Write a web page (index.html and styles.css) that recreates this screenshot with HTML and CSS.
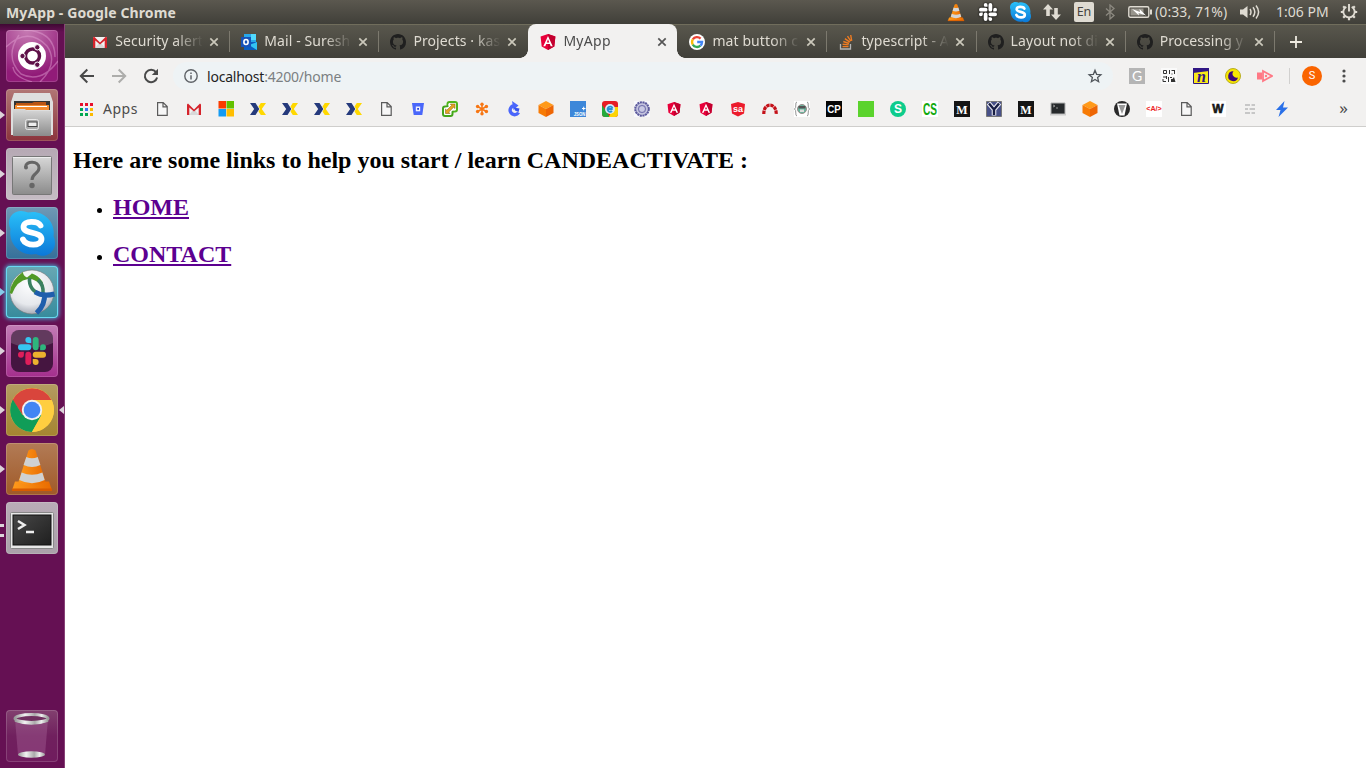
FILE: index.html
```html
<!DOCTYPE html>
<html lang="en">
<head>
<meta charset="utf-8">
<title>MyApp</title>
<link rel="stylesheet" href="styles.css">
</head>
<body>
<svg class="defs" width="0" height="0" aria-hidden="true">
  <defs>
    <linearGradient id="silver" x1="0" y1="0" x2="0" y2="1"><stop offset="0" stop-color="#d8d8d8"/><stop offset="1" stop-color="#8b8b8b"/></linearGradient>
    <linearGradient id="skyblue" x1="0" y1="0" x2="0" y2="1"><stop offset="0" stop-color="#2ac0f8"/><stop offset="1" stop-color="#0b78d8"/></linearGradient>
    <linearGradient id="orange" x1="0" y1="0" x2="1" y2="0"><stop offset="0" stop-color="#ff9b1c"/><stop offset="1" stop-color="#e86a00"/></linearGradient>
    <linearGradient id="dark" x1="0" y1="0" x2="1" y2="1"><stop offset="0" stop-color="#474747"/><stop offset="1" stop-color="#1f1f1f"/></linearGradient>
    <linearGradient id="rim" x1="0" y1="0" x2="1" y2="0"><stop offset="0" stop-color="#999"/><stop offset=".3" stop-color="#f2f2f2"/><stop offset=".6" stop-color="#aaa"/><stop offset=".8" stop-color="#eee"/><stop offset="1" stop-color="#999"/></linearGradient>
    <radialGradient id="ball" cx=".45" cy=".3" r=".7"><stop offset="0" stop-color="#fff"/><stop offset=".7" stop-color="#e6e8ec"/><stop offset="1" stop-color="#a9aeb8"/></radialGradient>
    <pattern id="mesh" width="2" height="2" patternUnits="userSpaceOnUse"><rect width="2" height="2" fill="#f4f4f4"/><rect width="1" height="1" fill="#a9adb0"/><rect x="1" y="1" width="1" height="1" fill="#a9adb0"/></pattern>
  </defs>
  <symbol id="close" viewBox="0 0 10 10"><path d="M1.300 1.300l7.400 7.400M8.700 1.300L1.300 8.700" stroke="currentColor" stroke-width="1.700" fill="none"/></symbol>
  <symbol id="github" viewBox="0 0 16 16"><path fill="#1f1f1f" d="M8 0C3.58 0 0 3.58 0 8c0 3.54 2.29 6.53 5.47 7.59.4.07.55-.17.55-.38 0-.19-.01-.82-.01-1.49-2.01.37-2.53-.49-2.69-.94-.09-.23-.48-.94-.82-1.13-.28-.15-.68-.52-.01-.53.63-.01 1.08.58 1.23.82.72 1.21 1.87.87 2.33.66.07-.52.28-.87.51-1.07-1.78-.2-3.64-.89-3.64-3.95 0-.87.31-1.59.82-2.15-.08-.2-.36-1.02.08-2.12 0 0 .67-.21 2.2.82.64-.18 1.32-.27 2-.27s1.36.09 2 .27c1.53-1.04 2.2-.82 2.2-.82.44 1.1.16 1.92.08 2.12.51.56.82 1.27.82 2.15 0 3.07-1.87 3.75-3.65 3.95.29.25.54.73.54 1.48 0 1.07-.01 1.93-.01 2.2 0 .21.15.46.55.38A8.01 8.01 0 0 0 16 8c0-4.42-3.58-8-8-8z"/></symbol>
  <symbol id="gmail" viewBox="0 0 16 16"><path fill="#f1f1f1" d="M1 3h14v11H1z"/><path fill="#d8d8d8" d="M3 14l5-6 5 6z"/><path fill="#d5232b" d="M1 14V3.400L2 2.600 8 8.400l6-5.800 1 .8V14h-2.300V6.400L8 10.600 3.300 6.400V14z"/></symbol>
  <symbol id="angular" viewBox="0 0 16 16"><path fill="#e8003a" d="M8 0l7.400 2.600-1.100 9.800L8 16l-6.300-3.600L.6 2.600z"/><path fill="#c3002f" d="M8 0l7.400 2.600-1.100 9.800L8 16z"/><path fill="#fff" fill-rule="evenodd" d="M8 2l4.700 10.300h-2L9.800 10H6.200l-.9 2.300h-2zM8 5.300L6.800 8.400h2.400z"/></symbol>
  <symbol id="xmark" viewBox="0 0 16 16"><path fill="#253a7c" d="M0 2h5.500L9.300 8l-3.800 6H0l4.200-6z"/><path fill="#f2f1f0" d="M0 4.300l3 3.200v1L0 11.700z"/><path fill="#ffd800" d="M16 2h-5.200L8.500 5.600 10 8l-1.500 2.400L10.800 14H16l-4.200-6z"/></symbol>
  <symbol id="doc" viewBox="0 0 16 16"><path fill="#f7f7f7" stroke="#5b5b5b" stroke-width="1.200" d="M3.600 1.600h5.600l4 4v8.800H3.600zM9 1.800v4h4"/></symbol>
  <symbol id="cube" viewBox="0 0 16 16"><path fill="#ff9a1a" d="M8 0l7.500 3.900L8 7.900.5 3.900z"/><path fill="#f77b05" d="M.5 3.900L8 7.900V16L.5 12z"/><path fill="#ee6605" d="M15.500 3.900L8 7.900V16l7.500-4z"/></symbol>
  <symbol id="cone" viewBox="0 0 44 44"><path fill="url(#orange)" d="M5 34h34l3 9H2z"/><path fill="#d85b00" d="M2 41h40v2.500H2z"/><path fill="url(#orange)" d="M18.500 3q3.500-3 7 0l10 31q-13.500 8-27 0z"/><path class="band" d="M16.300 9.500q5.700 2.500 11.400 0l2.700 8q-8.400 4-16.800 0zM11.600 25q10.400 4.500 20.800 0l2.300 7.500q-12.700 6.500-25.400 0z"/></symbol>
  <symbol id="skype" viewBox="0 0 46 46"><path fill="url(#skyblue)" d="M12 1C5 1 0 6 0 13q0 3 1.500 6C-1 34 12 47 27 44c9 5 19-1 19-11q0-4-1.500-7C47 11 33-1 19 2.500Q16 1 12 1z"/><path fill="none" stroke="#fff" stroke-width="5.800" stroke-linecap="round" d="M31.500 15.500C29 10.800 14.500 10 14.500 17c0 7.500 18 4 18 12 0 7.500-15.500 7.500-18.500.5"/></symbol>
  <symbol id="slack" viewBox="0 0 24 24">
    <path fill="var(--s4)" d="M5.042 15.165a2.528 2.528 0 0 1-2.520 2.523A2.528 2.528 0 0 1 0 15.165a2.527 2.527 0 0 1 2.522-2.520h2.520zM6.313 15.165a2.527 2.527 0 0 1 2.521-2.520 2.527 2.527 0 0 1 2.521 2.520v6.313A2.528 2.528 0 0 1 8.834 24a2.528 2.528 0 0 1-2.521-2.522z"/>
    <path fill="var(--s1)" d="M8.834 5.042a2.528 2.528 0 0 1-2.521-2.520A2.528 2.528 0 0 1 8.834 0a2.528 2.528 0 0 1 2.521 2.522v2.520zM8.834 6.313a2.528 2.528 0 0 1 2.521 2.521 2.528 2.528 0 0 1-2.521 2.521H2.522A2.528 2.528 0 0 1 0 8.834a2.528 2.528 0 0 1 2.522-2.521z"/>
    <path fill="var(--s2)" d="M18.956 8.834a2.528 2.528 0 0 1 2.522-2.521A2.528 2.528 0 0 1 24 8.834a2.528 2.528 0 0 1-2.522 2.521h-2.522zM17.688 8.834a2.528 2.528 0 0 1-2.523 2.521 2.527 2.527 0 0 1-2.520-2.521V2.522A2.527 2.527 0 0 1 15.165 0a2.528 2.528 0 0 1 2.523 2.522z"/>
    <path fill="var(--s3)" d="M15.165 18.956a2.528 2.528 0 0 1 2.523 2.522A2.528 2.528 0 0 1 15.165 24a2.527 2.527 0 0 1-2.520-2.522v-2.522zM15.165 17.688a2.527 2.527 0 0 1-2.520-2.523 2.526 2.526 0 0 1 2.520-2.520h6.313A2.527 2.527 0 0 1 24 15.165a2.528 2.528 0 0 1-2.522 2.523z"/>
  </symbol>
</svg>

<header class="panel">
  <div class="panel-title">MyApp - Google Chrome</div>
  <div class="indicators">
    <svg class="i-vlc plain" viewBox="0 0 44 44"><use href="#cone"/></svg>
    <svg class="i-slack mono" viewBox="0 0 24 24"><use href="#slack"/></svg>
    <svg class="i-skype" viewBox="0 0 46 46"><use href="#skype"/></svg>
    <svg class="i-net" viewBox="0 0 18 16"><path fill="#dfdbd2" d="M5 0l5 5.500H6.800V12H3.200V5.500H0zM13 16l5-5.500h-3.200V4h-3.600v6.500H8z"/></svg>
    <span class="i-lang">En</span>
    <svg class="i-bt" viewBox="0 0 10 16"><path fill="none" stroke="#8c8980" stroke-width="1.300" d="M1 4.500l8 7-4 3.500V1l4 3.500-8 7"/></svg>
    <svg class="i-bat" viewBox="0 0 24 14"><rect x=".8" y="1.800" width="20" height="10.400" rx="1.500" fill="none" stroke="#dfdbd2" stroke-width="1.400"/><path fill="#dfdbd2" d="M22 4.500h2v5h-2z"/><path fill="#98958c" d="M2.500 3.500h13v7h-13z"/><path fill="#fff" d="M4 4l8 3-.5-3L18 10.500 10.500 8l.5 2.500z"/></svg>
    <span class="i-battext">(0:33, 71%)</span>
    <svg class="i-vol" viewBox="0 0 20 16"><path fill="#dfdbd2" d="M0 5.500h3L7.500 2v12L3 10.500H0z"/><path fill="none" stroke="#dfdbd2" stroke-width="1.500" d="M10 5q2 3 0 6M13 3.200q3.600 4.800 0 9.600M16 1.500q5.200 6.500 0 13"/></svg>
    <span class="i-time">1:06 PM</span>
    <svg class="i-gear" viewBox="0 0 18 18"><path fill="none" stroke="#dfdbd2" stroke-width="1.900" d="M6.300 3.800a5.700 5.700 0 1 0 5.400 0M9 1v7.500"/><path stroke="#dfdbd2" stroke-width="2.200" d="M3.400 9H.8M17.200 9h-2.600M9 14.500v2.700M5.100 12.900l-1.900 1.900M12.900 12.900l1.900 1.900M5 5L3.200 3.200M13 5l1.800-1.800"/></svg>
  </div>
</header>

<div class="desktop">
  <nav class="launcher">
    <div class="tile dash"><svg viewBox="0 0 52 52"><g fill="none" stroke="#e5a3d5" stroke-opacity=".45" stroke-width="1.400"><path d="M0 17Q22-4 41 16q12 17-7 36M52 31Q35 54 15 44-2 27 13 5M18 0q31 1 31 27M7 37Q8 47 26 52"/></g><circle cx="26" cy="26" r="14" fill="#fff"/><circle cx="26.500" cy="26" r="7" fill="none" stroke="#5e1048" stroke-width="3.400"/><g fill="#5e1048" stroke="#fff" stroke-width="1"><circle cx="16.500" cy="26" r="2.700"/><circle cx="31.300" cy="17.300" r="2.700"/><circle cx="31.300" cy="34.700" r="2.700"/></g></svg></div>
    <div class="tile files running"><svg viewBox="0 0 52 52"><path fill="#dedede" d="M8 4h36l3 9v33H5V13z"/><path fill="#343434" d="M8 12h36v9H8z"/><path fill="#b85414" d="M10 14h16l2-1h12v8H10z"/><path fill="#f28b30" d="M9 16h34v5H9z"/><path fill="#fff" d="M11 17h30v1H11z"/><path fill="url(#silver)" d="M7 20h12l2 2h24v25H7z"/><rect x="19.500" y="30.500" width="13" height="10" rx="2" fill="#aaa" stroke="#e8e8e8"/><rect x="22" y="33" width="9" height="4.500" fill="#eee" stroke="#444"/></svg></div>
    <div class="tile unknown running"><svg viewBox="0 0 52 52"><rect x="6.500" y="8.500" width="39" height="38" rx="1" fill="url(#silver)" stroke="#777"/><path d="M7 9.500h38" stroke="#eee"/><path fill="none" stroke="#666" stroke-width="3" d="M19.500 19c0-6.500 13.500-6.500 13.500 1 0 6-7 5-7 12"/><circle cx="20" cy="19.500" r="2" fill="#666"/><circle cx="26" cy="37.500" r="2.700" fill="#666"/></svg></div>
    <div class="tile sky running"><svg viewBox="0 0 52 52"><svg x="3" y="3" width="46" height="46"><use href="#skype"/></svg></svg></div>
    <div class="tile vpn running"><svg viewBox="0 0 52 52"><circle cx="26" cy="26" r="22" fill="url(#ball)" stroke="#777" stroke-width=".6"/><path d="M3.800 27Q5 14 17 6l9 1.500q6 1.500 11 9l-3 2q-5-6-12-5.500Q11 14.500 6 28z" fill="#529a25"/><path d="M17 6q5-1 9 1.500l-5 4q-4-2-4-5.500z" fill="#f4f6f4"/><path d="M23.500 12q-1 13 13 17M32 14q6 5 5 14" fill="none" stroke="#3a8060" stroke-width="3.600"/><path d="M29 26q8 5 19.500 2M38.500 27q1 12-8 20" fill="none" stroke="#1f5eac" stroke-width="5"/></svg></div>
    <div class="tile slack running"><svg viewBox="0 0 52 52"><rect x="5" y="5" width="42" height="42" rx="8" fill="#451540"/><path fill="#fff" opacity=".16" d="M13 5h26a8 8 0 0 1 8 8v5q-21 9-42 0v-5a8 8 0 0 1 8-8z"/><svg class="tinted" x="12" y="12" width="28" height="28"><use href="#slack"/></svg></svg></div>
    <div class="tile chrome running focused"><svg viewBox="0 0 52 52"><circle cx="26" cy="26" r="22" fill="#ffce40"/><path fill="#d9453c" d="M6.500 16A22 22 0 0 1 45.500 16H26L16.500 31z"/><path fill="#109d58" d="M6.800 15.500A22 22 0 0 0 26 48l9.500-17-19 0z"/><path fill="#ffce40" d="M26 16h19.500A22 22 0 0 1 26 48l9.500-17z"/><circle cx="26" cy="26" r="10.200" fill="#f2f2f2"/><circle cx="26" cy="26" r="8.300" fill="#4285f4"/></svg></div>
    <div class="tile vlc running"><svg viewBox="0 0 52 52"><svg x="4" y="4" width="44" height="45"><use href="#cone"/></svg></svg></div>
    <div class="tile term running double"><svg viewBox="0 0 52 52"><rect x="4.500" y="10.500" width="43" height="36" rx="1" fill="#e8e8e8" stroke="#888"/><rect x="7" y="13" width="38" height="30" fill="url(#dark)" stroke="#111"/><path fill="none" stroke="#eee" stroke-width="2.500" d="M12 19l6.500 4-6.500 4M20 30h8"/></svg></div>
    <div class="tile trash"><svg viewBox="0 0 52 52"><path fill="#b87cab" fill-opacity=".3" d="M9 9h33l-3 36q-13 4-27 0z"/><ellipse cx="25.500" cy="44.500" rx="13.500" ry="3.200" fill="url(#rim)"/><ellipse cx="25.500" cy="8.500" rx="16.500" ry="4" fill="#70305f" stroke="url(#rim)" stroke-width="3"/><path fill="none" stroke="url(#rim)" stroke-width="2.500" d="M9 10.500q16.500 6 33 0"/></svg></div>
  </nav>

  <main class="browser">
    <div class="tabs">
      <div class="tab"><svg class="fav"><use href="#gmail"/></svg><span class="label">Security alert</span><svg class="x"><use href="#close"/></svg></div>
      <div class="tab"><svg class="fav" viewBox="0 0 16 16"><path fill="#28a8ea" d="M3 0h12v13H3z"/><path fill="#50d9ff" d="M10 0h5v6h-5z"/><path fill="#0a5cc0" d="M3 8h13v8H3z"/><path fill="#33c2f2" d="M16 8v8L8 11z"/><path fill="#1752b8" d="M0 3h10v10H0z"/><ellipse cx="5" cy="8" rx="2.100" ry="2.500" fill="none" stroke="#fff" stroke-width="1.600"/></svg><span class="label">Mail - Suresh K</span><svg class="x"><use href="#close"/></svg></div>
      <div class="tab last"><svg class="fav"><use href="#github"/></svg><span class="label">Projects · kas</span><svg class="x"><use href="#close"/></svg></div>
      <div class="tab active"><svg class="fav"><use href="#angular"/></svg><span class="label">MyApp</span><svg class="x"><use href="#close"/></svg></div>
      <div class="tab"><svg class="fav" viewBox="0 0 16 16"><circle cx="8" cy="8" r="8" fill="#fff"/><g fill="none" stroke-width="2.300"><path stroke="#ea4335" d="M3.800 5.400a5 5 0 0 1 7.800-.8"/><path stroke="#fbbc05" d="M3.800 10.600a5 5 0 0 1 0-5.200"/><path stroke="#34a853" d="M11.400 11.700a5 5 0 0 1-7.600-1.100"/><path stroke="#4285f4" d="M8.200 8h4.900a5 5 0 0 1-1.700 3.700"/></g></svg><span class="label">mat button c</span><svg class="x"><use href="#close"/></svg></div>
      <div class="tab"><svg class="fav" viewBox="0 0 16 16"><path fill="none" stroke="#b5b5b5" stroke-width="1.300" d="M2.500 10v5h10v-5"/><g stroke="#ef7c22" stroke-width="1.400"><path d="M4.500 12.600h6M4.600 10.200l6 .7M5.300 7.500l5.700 2M6.900 4.600l4.900 3.500M9.500 2.200l3.300 4.900M12.700 1l1 5.800"/></g></svg><span class="label">typescript - A</span><svg class="x"><use href="#close"/></svg></div>
      <div class="tab"><svg class="fav"><use href="#github"/></svg><span class="label">Layout not di</span><svg class="x"><use href="#close"/></svg></div>
      <div class="tab"><svg class="fav"><use href="#github"/></svg><span class="label">Processing y</span><svg class="x"><use href="#close"/></svg></div>
      <svg class="newtab" viewBox="0 0 12 12"><path stroke="#eeeae0" stroke-width="1.800" d="M6 0v12M0 6h12"/></svg>
    </div>

    <div class="toolbar">
      <svg class="nav" viewBox="0 0 16 16"><path fill="none" stroke="#494949" stroke-width="2" d="M15 8H2M8.300 1.500L1.800 8l6.500 6.500"/></svg>
      <svg class="nav" viewBox="0 0 16 16"><path fill="none" stroke="#adadab" stroke-width="2" d="M1 8h13M7.700 1.500L14.200 8l-6.500 6.500"/></svg>
      <svg class="nav" viewBox="0 0 16 16"><path fill="none" stroke="#494949" stroke-width="2" d="M13 4.200A6.200 6.200 0 1 0 14.100 9.500"/><path fill="#494949" d="M15 .8V7H8.800z"/></svg>
      <div class="omnibox">
        <svg class="info" viewBox="0 0 14 14"><circle cx="7" cy="7" r="6.200" fill="none" stroke="#5f6368" stroke-width="1.400"/><path stroke="#5f6368" stroke-width="1.500" d="M7 6.200v4.200M7 3.400v1.500"/></svg>
        <span class="url"><b>localhost</b>:4200/home</span>
        <svg class="star" viewBox="0 0 16 16"><path fill="none" stroke="#50565c" stroke-width="1.300" d="M8 2.300l1.600 4 4.300.4-3.300 2.800 1 4.200L8 11.500l-3.600 2.200 1-4.200-3.300-2.800 4.300-.4z"/></svg>
      </div>
      <div class="exts">
        <svg viewBox="0 0 16 16"><path fill="#b5b5b5" d="M0 0h16v16H0z"/><text x="8" y="12.800" class="g-glyph">G</text></svg>
        <svg viewBox="0 0 16 16"><path fill="#fafafa" d="M0 0h16v16H0z"/><path fill="none" stroke="#333" stroke-width="1" d="M2.500 2.500h3v3h-3zM8.500 2v4M10.500 2.500h3M13.500 2v4M11 5.500v1M2 9h3M5.500 8v3M2 11v2.500h3M7.500 9v5M9 9.500h2"/><path fill="#333" d="M10 11h1.500l1.500-2 1.500 5H10z"/></svg>
        <svg viewBox="0 0 16 16"><path fill="#f8ea18" stroke="#301684" d="M.5.500h15v15H.5z"/><path fill="#301684" d="M0 0h16v3L0 5z"/><text x="8.500" y="14" class="n-glyph">n</text></svg>
        <svg viewBox="0 0 16 16"><circle cx="8" cy="8" r="7.500" fill="#f6e600" stroke="#b9ad22"/><path fill="#3d087b" d="M8.500 3.200A5 5 0 1 0 13 9.500 4 4 0 0 1 8.500 3.200z"/></svg>
        <svg viewBox="0 0 16 16"><path fill="#ff7885" d="M0 4.500h5v7H0z"/><path fill="none" stroke="#ff7885" stroke-width="1.800" d="M6 3l9 5-9 5z"/><circle cx="9" cy="8" r="1.200" fill="#ff7885"/></svg>
      </div>
      <div class="avatar">S</div>
      <svg class="menu" viewBox="0 0 4 16"><g fill="#4c4c4c"><circle cx="2" cy="3" r="1.600"/><circle cx="2" cy="8" r="1.600"/><circle cx="2" cy="13" r="1.600"/></g></svg>
    </div>

    <div class="bookmarks">
      <svg class="grid" viewBox="0 0 13 13"><path fill="#e8102d" d="M0 0h3v3H0zM5 0h3v3H5zM10 0h3v3h-3z"/><path fill="#00a651" d="M0 5h3v3H0zM0 10h3v3H0zM5 10h3v3H5z"/><path fill="#3878f0" d="M5 5h3v3H5z"/><path fill="#fbb900" d="M10 5h3v3h-3zM10 10h3v3h-3z"/></svg>
      <span class="apps">Apps</span>
      <div class="marks">
        <svg><use href="#doc"/></svg>
        <svg><use href="#gmail"/></svg>
        <svg viewBox="0 0 16 16"><path fill="#fb3b00" d="M.5 0H8v7.500H.5z"/><path fill="#63c100" d="M8.500 0H16v7.500H8.500z"/><path fill="#149bf3" d="M.5 8H8v7.500H.5z"/><path fill="#ffbe00" d="M8.500 8H16v7.500H8.500z"/></svg>
        <svg><use href="#xmark"/></svg>
        <svg><use href="#xmark"/></svg>
        <svg><use href="#xmark"/></svg>
        <svg><use href="#xmark"/></svg>
        <svg><use href="#doc"/></svg>
        <svg viewBox="0 0 16 16"><path fill="#4a67fa" d="M2 2h12l-1.700 12H3.700z"/><path fill="#eef0ff" d="M5.800 5.500h4.400v4.800H5.800z"/><path fill="#263dd9" d="M7.200 7h1.800v1.800H7.200z"/></svg>
        <svg viewBox="0 0 16 16"><rect x="5.500" y="1" width="9.500" height="9.500" rx="2" fill="#fff" stroke="#50b51c" stroke-width="2"/><rect x="1" y="5.500" width="9.500" height="9.500" rx="2" fill="#fff" stroke="#43a51b" stroke-width="2"/><path fill="#fff" d="M6.500 3h7v6l-4 1-1 3H3V7l3.500-1z"/><path fill="#e5a423" stroke="#8b6818" stroke-width=".6" d="M13 3v4.500l-1.500-1.200-4.800 4.800L8 12.500H3.500V8l1.300 1.200 4.800-4.800L8.300 3z"/></svg>
        <svg viewBox="0 0 16 16"><g stroke="#f77613" stroke-width="1.500"><path d="M8 2v12M2.800 5l10.400 6M13.200 5L2.800 11"/></g><g fill="#f77613"><circle cx="8" cy="3.200" r="1.700"/><circle cx="8" cy="12.800" r="1.700"/><circle cx="3.600" cy="5.500" r="1.700"/><circle cx="12.400" cy="10.500" r="1.700"/><circle cx="12.400" cy="5.500" r="1.700"/><circle cx="3.600" cy="10.500" r="1.700"/></g></svg>
        <svg viewBox="0 0 16 16"><path fill="none" stroke="#4a66fb" stroke-width="3.400" d="M8.500 4.700a4.500 4.500 0 1 0 4 6.800"/><path fill="#4a66fb" d="M6 0l6.500 4.500L7.500 9z"/><path fill="#3653ee" d="M8 6.500l5.500 1-1 3.500-3.500-1.500z"/></svg>
        <svg><use href="#cube"/></svg>
        <svg viewBox="0 0 16 16"><path fill="#3d87d9" d="M0 0h16v16H0z"/><path stroke="#fff" d="M12 7.500h3.500M13.700 5.700v3.600"/><text x="9.500" y="14.800" textLength="11.500" lengthAdjust="spacingAndGlyphs" class="json-glyph">JSON</text></svg>
        <svg viewBox="0 0 16 16"><rect width="16" height="16" rx="3" fill="#e51c24"/><path fill="#25aa3d" d="M0 4l8 12H3q-3 0-3-3z"/><path fill="#fdd406" d="M7 16l4-10h5v7q0 3-3 3z"/><circle cx="8" cy="8" r="5" fill="#d5ecf8"/><path fill="none" stroke="#2491d4" stroke-width="1.800" d="M5.200 8h5.500M10.500 7a2.600 2.600 0 1 0-.5 3"/></svg>
        <svg viewBox="0 0 16 16"><path fill="#f8f8fc" d="M0 0h16v16H0z"/><circle cx="8" cy="8" r="6.800" fill="#a5a4cd" stroke="#5c5a9c" stroke-width="2" stroke-dasharray="2 .7"/><circle cx="8" cy="8" r="5" fill="none" stroke="#e6e6f2" stroke-width=".7"/><circle cx="8" cy="8" r="3.500" fill="#c9c9e4" stroke="#706eac" stroke-width="1"/></svg>
        <svg class="small"><use href="#angular"/></svg>
        <svg class="small"><use href="#angular"/></svg>
        <svg viewBox="0 0 16 16"><path fill="#ec1b2c" d="M8 1l7 2-1 9.500L8 15.500 2 12.500 1 3z"/><text x="8" y="10.500" class="sa-glyph">sa</text></svg>
        <svg viewBox="0 0 16 16"><path fill="none" stroke="#c41018" stroke-width="3.200" stroke-dasharray="3.400 .7" d="M1.800 13C1.500 1.200 14.500 1.200 14.200 13"/></svg>
        <svg viewBox="0 0 16 16"><path fill="#fff" d="M0 0h16v16H0z"/><path fill="none" stroke="#8a8a8a" stroke-width=".9" d="M3 1Q1.500 1 1.800 4T.5 8q1.500 1 1.300 4t1.200 3M13 1q1.500 0 1.200 3t1.300 4q-1.500 1-1.300 4t-1.200 3"/><circle cx="8" cy="8" r="4.500" fill="#67b79f" stroke="#9d8c8b"/><path fill="#555" d="M4.500 5h7v2.500h-7z"/><path fill="#ddd" d="M6 8.500h4V11H6z"/></svg>
        <svg viewBox="0 0 16 16"><path fill="#060606" d="M0 0h16v16H0z"/><text x="8" y="12" textLength="13.500" lengthAdjust="spacingAndGlyphs" class="cp-glyph">CP</text></svg>
        <svg viewBox="0 0 16 16"><path fill="#5bd32d" d="M0 0h16v16H0z"/></svg>
        <svg viewBox="0 0 16 16"><circle cx="8" cy="8" r="8" fill="#0dcc8c"/><text x="8" y="12.200" class="s-glyph">S</text></svg>
        <svg viewBox="0 0 16 16"><path fill="#fff" d="M0 0h16v16H0z"/><text x="8" y="14" textLength="14" lengthAdjust="spacingAndGlyphs" class="cs-glyph">CS</text></svg>
        <svg viewBox="0 0 16 16"><path fill="#151515" d="M0 0h16v16H0z"/><text x="8" y="12.500" class="serif-glyph">M</text></svg>
        <svg viewBox="0 0 16 16"><path fill="#485188" stroke="#777" d="M.5.500h15v15H.5z"/><path fill="none" stroke="#e8e8f0" stroke-width="4.600" d="M2.500 2L8 8.500 13.500 2M8 8v6.500"/><path fill="none" stroke="#171d43" stroke-width="2.400" d="M3 2.500l5 6 5-6M8 8v6"/></svg>
        <svg viewBox="0 0 16 16"><path fill="#151515" d="M0 0h16v16H0z"/><text x="8" y="12.500" class="serif-glyph">M</text></svg>
        <svg viewBox="0 0 16 16"><path fill="#272a2c" stroke="#b0b0b0" d="M1 2h14v11H1z"/><path fill="none" stroke="#aaa" stroke-width=".8" d="M3 4l2 1-2 1M6 7h2"/><path fill="#ccc" d="M0 13h16v1.500H0z"/></svg>
        <svg><use href="#cube"/></svg>
        <svg viewBox="0 0 16 16"><circle cx="8" cy="8" r="8" fill="#292929"/><path fill="#fff" d="M3 2.500h10l-2.500 12h-5z"/><path fill="#999" d="M1.500 6l3 7M14.500 6l-3 7M4.500 4h7L8 13z"/></svg>
        <svg viewBox="0 0 16 16"><path fill="#fff" d="M0 0h16v16H0z"/><text x="8" y="10" textLength="15.500" lengthAdjust="spacingAndGlyphs" class="a-glyph">&lt;A/&gt;</text></svg>
        <svg><use href="#doc"/></svg>
        <svg viewBox="0 0 16 16"><path fill="#fff" d="M0 0h16v16H0z"/><text x="8" y="12" class="w-glyph">W</text></svg>
        <svg viewBox="0 0 16 16"><path stroke="#b9b9b9" stroke-width="1.500" d="M3 4h5M9.500 4H13M3 8h3M7.500 8H13M3 12h5M9.500 12H13"/></svg>
        <svg viewBox="0 0 16 16"><path fill="#2a70e8" d="M10.500 0L2 9h4.500L4.500 16 14 6.500H9z"/></svg>
      </div>
      <span class="more">»</span>
    </div>

    <section class="page">
      <h2>Here are some links to help you start / learn CANDEACTIVATE :</h2>
      <ul>
        <li><h2><a href="#">HOME</a></h2></li>
        <li><h2><a href="#">CONTACT</a></h2></li>
      </ul>
    </section>
  </main>
</div>
</body>
</html>
```
FILE: styles.css
```css
* { box-sizing: border-box; }
html, body { height: 100%; }
body {
  margin: 0;
  display: flex;
  flex-direction: column;
  overflow: hidden;
  font-family: "Noto Sans", "Open Sans", sans-serif;
  font-size: 14px;
}
svg { display: block; flex: none; }
.defs { position: absolute; }

.panel {
  height: 24px;
  flex: none;
  display: flex;
  justify-content: space-between;
  align-items: center;
  padding: 0 8px 0 6px;
  color: #dfdbd2;
  background: linear-gradient(#5b584f, #403f39);
}
.panel-title { font-weight: 700; font-size: 14px; letter-spacing: .1px; white-space: nowrap; }
.indicators { display: flex; align-items: center; white-space: nowrap; }
.i-vlc { width: 18px; height: 21px; margin-right: 14px; }
.band { fill: url(#mesh); }
.plain { --band: #e4e4e4; }
.i-slack { width: 18px; height: 18px; margin-right: 13px; overflow: visible; filter: drop-shadow(0 0 1px #000); }
.mono { --s1: #fff; --s2: #fff; --s3: #fff; --s4: #fff; }
.tinted { --s1: #36c5f0; --s2: #2eb67d; --s3: #ecb22e; --s4: #e01e5a; }
.i-skype { width: 21px; height: 22px; margin-right: 12px; }
.i-net { width: 18px; height: 16px; margin-right: 13px; }
.i-lang {
  width: 20px;
  height: 20px;
  line-height: 20px;
  margin-right: 11px;
  border-radius: 2px;
  text-align: center;
  font-size: 12.5px;
  color: #45433d;
  background: #dfdbd2;
}
.i-bt { width: 10px; height: 16px; margin-right: 13px; }
.i-bat { width: 24px; height: 14px; margin-right: 3px; }
.i-battext { width: 74px; margin-right: 11px; letter-spacing: .1px; }
.i-vol { width: 20px; height: 16px; margin-right: 16px; }
.i-time { width: 53px; margin-right: 11px; }
.i-gear { width: 18px; height: 18px; }
.i-battext, .i-time { padding-bottom: 1px; }

.desktop { flex: 1; display: flex; min-height: 0; }
.launcher {
  width: 65px;
  flex: none;
  display: flex;
  flex-direction: column;
  gap: 7px;
  padding: 6px;
  border-right: 1px solid #874176;
  background: linear-gradient(#3f0833, #651053 8px);
}
.tile {
  position: relative;
  width: 52px;
  height: 52px;
  flex: none;
  border-radius: 4px;
  box-shadow: inset 0 0 0 1px rgba(255, 255, 255, .16);
}
.tile > svg { width: 52px; height: 52px; }
.dash { background: radial-gradient(circle at 40% 0, #c77cb4, #911b78 75%); }
.files { background: linear-gradient(#b17675, #8b343c); }
.unknown { background: linear-gradient(#b6a9b4, #c5bcc4); }
.sky { background: linear-gradient(#7099b5, #35709a); }
.vpn { background: linear-gradient(#68a8b4, #378b9c); box-shadow: inset 0 0 0 1px #69d9f2, 0 0 4px 1px #46afd2; }
.slack { background: linear-gradient(#c27cb5, #a42f8d); }
.chrome { background: linear-gradient(#b49b62, #a58530); }
.vlc { background: linear-gradient(#b27b56, #a05a28); }
.term { background: linear-gradient(#b9acb7, #aaa1a9); }
.trash { margin-top: auto; background: linear-gradient(#82406f, #70205e 50%, #701c5e); }
.running::before, .focused::after {
  content: "";
  position: absolute;
  top: 21.5px;
  left: -6px;
  border: 4px solid transparent;
  border-left: 5px solid #dcd3da;
  border-right: 0;
}
.focused::after {
  left: auto;
  right: -6px;
  border-right: 5px solid #dcd3da;
  border-left: 0;
}
.vpn::before { border-left-color: #85cce8; }
.running.double::before { top: 22px; width: 4px; height: 7px; border: solid #dcd3da; border-width: 3px 0; }

.browser { flex: 1; min-width: 0; display: flex; flex-direction: column; background: #fff; }
.tabs {
  height: 34px;
  flex: none;
  display: flex;
  align-items: center;
  padding-left: 15.2px;
  border-top: 1px solid #706d5c;
  background: linear-gradient(#59574d, #403f39);
}
.tab {
  position: relative;
  width: 149.1px;
  height: 33px;
  flex: none;
  display: flex;
  align-items: center;
  padding-left: 12px;
  color: #dfdbd2;
}
.tab:not(.last, .active)::after {
  content: "";
  position: absolute;
  right: -1px;
  top: 6px;
  width: 1px;
  height: 21px;
  background: #7c796e;
}
.fav { width: 16px; height: 16px; margin-right: 7px; }
.label {
  width: 87px;
  margin-right: 7px;
  padding-bottom: 2px;
  overflow: hidden;
  white-space: nowrap;
  letter-spacing: .1px;
  -webkit-mask-image: linear-gradient(90deg, #000 60px, transparent 88px);
  mask-image: linear-gradient(90deg, #000 60px, transparent 88px);
}
.x { width: 10px; height: 10px; color: #cbc8bb; }
.last { width: 150px; }
.active {
  width: 149px;
  height: 34px;
  margin-top: -1px;
  padding: 1px 0 0 12px;
  border-radius: 8px 8px 0 0;
  color: #4c4c4c;
  background: #f2f1f0;
}
.active .label { letter-spacing: .3px; }
.active::before, .active::after {
  content: "";
  position: absolute;
  bottom: 0;
  width: 8px;
  height: 8px;
}
.active::before { left: -8px; background: radial-gradient(circle at 0 0, transparent 7.5px, #f2f1f0 8px); }
.active::after { right: -8px; background: radial-gradient(circle at 100% 0, transparent 7.5px, #f2f1f0 8px); }
.active .x { color: #555; }
.newtab { width: 12px; height: 12px; margin-left: 16px; }

.toolbar { height: 36px; flex: none; display: flex; align-items: center; padding: 0 20px 0 14px; background: #f2f1f0; }
.nav { width: 16px; height: 16px; margin-right: 16px; }
.omnibox {
  width: 940px;
  height: 28px;
  margin-left: -2px;
  display: flex;
  align-items: center;
  padding: 0 10px 0 11px;
  border-radius: 14px;
  background: #eef3f5;
}
.info { width: 14px; height: 14px; margin-right: 9px; }
.url { flex: 1; letter-spacing: -.22px; color: #7b7f82; }
.url b { font-weight: 400; color: #1f1f1f; }
.star { width: 16px; height: 16px; }
.exts { display: flex; gap: 16px; margin-left: 16px; padding-right: 16px; border-right: 1px solid #d1d0cf; }
.exts svg { width: 16px; height: 16px; }
.avatar {
  width: 20px;
  height: 20px;
  margin-left: 12px;
  border-radius: 50%;
  font: 11px/20px Roboto, sans-serif;
  text-align: center;
  color: #fff;
  background: #fa6400;
}
.menu { width: 4px; height: 16px; margin-left: 20px; }

.bookmarks {
  height: 33px;
  flex: none;
  display: flex;
  align-items: center;
  padding: 0 18px 2px 15px;
  border-bottom: 1px solid #cfcecc;
  background: #f2f1f0;
  color: #4b4b4b;
}
.grid { width: 13px; height: 13px; margin-right: 10px; }
.apps { width: 51px; padding-bottom: 2px; letter-spacing: .5px; }
.marks { display: flex; gap: 16px; }
.marks > svg { width: 16px; height: 16px; }
.marks > .small { padding: 1px; }
.more { margin-left: auto; padding-bottom: 2px; font-size: 17px; line-height: 16px; }

text { text-anchor: middle; font-family: "Liberation Sans", sans-serif; font-weight: 700; fill: #fff; }
.serif-glyph { font: 700 12px "Liberation Serif", serif; }
.g-glyph { font: 14px Lato, sans-serif; }
.n-glyph { font: italic 700 16px "Liberation Serif", serif; fill: #301684; }
.json-glyph { font-size: 5px; }
.sa-glyph { font-size: 9px; }
.cp-glyph { font-size: 11px; }
.s-glyph { font-size: 12px; }
.cs-glyph { font-size: 16px; fill: #11a80e; }
.a-glyph { font-size: 8px; fill: #ed1c24; }
.w-glyph { font-size: 12px; fill: #171717; stroke: #171717; stroke-width: .6px; }

.page { flex: 1; padding: 0 8px; font: 16px "Liberation Serif", serif; color: #000; }
.page h2 { margin: 19.92px 0; font-size: 24px; line-height: 27px; }
.page ul { margin: 0; padding-left: 40px; }
.page a { color: #5c0090; }
```
